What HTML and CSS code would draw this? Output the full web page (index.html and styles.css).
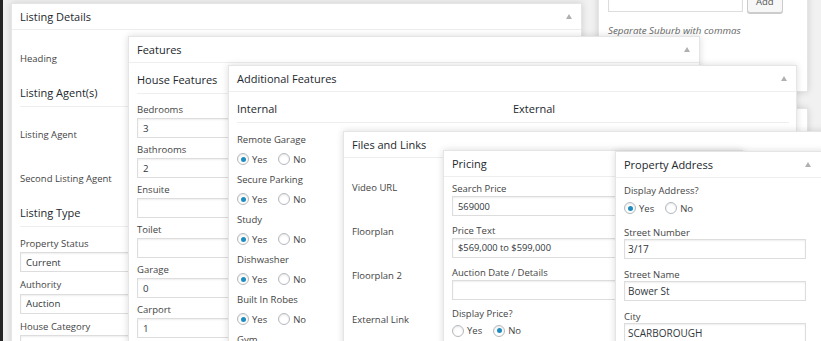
FILE: index.html
```html
<!DOCTYPE html>
<html lang="en">
<head>
  <meta charset="UTF-8">
  <title>Listing editor</title>
  <link rel="stylesheet" href="styles.css">
</head>
<body>
  <div class="desk">

    <!-- Listing Details -->
    <div class="postbox details">
      <h3 class="hndle"><span>Listing Details</span><i class="arrow"></i></h3>
      <div class="inside">
        <div class="row">Heading</div>
        <h4 class="section">Listing Agent(s)</h4>
        <div class="row">Listing Agent</div>
        <div class="row">Second Listing Agent</div>
        <h4 class="section">Listing Type</h4>
        <div class="stack">
          <label class="lbl">Property Status</label>
          <select class="box"><option>Current</option></select>
          <label class="lbl">Authority</label>
          <select class="box"><option>Auction</option></select>
          <label class="lbl">House Category</label>
          <select class="box"><option></option></select>
        </div>
      </div>
    </div>

    <!-- sidebar boxes -->
    <div class="postbox side-tags">
      <div class="inside">
        <div class="tag-row">
          <input class="box tag-input" type="text">
          <button class="button">Add</button>
        </div>
        <p class="howto">Separate Suburb with commas</p>
      </div>
    </div>
    <div class="postbox side-next"></div>

    <!-- Features -->
    <div class="postbox features">
      <h3 class="hndle"><span>Features</span><i class="arrow"></i></h3>
      <div class="inside">
        <h4 class="section">House Features</h4>
        <div class="stack">
          <label class="lbl">Bedrooms</label>
          <input class="box" type="text" value="3">
          <label class="lbl">Bathrooms</label>
          <input class="box" type="text" value="2">
          <label class="lbl">Ensuite</label>
          <input class="box" type="text" value="">
          <label class="lbl">Toilet</label>
          <input class="box" type="text" value="">
          <label class="lbl">Garage</label>
          <input class="box" type="text" value="0">
          <label class="lbl">Carport</label>
          <input class="box" type="text" value="1">
        </div>
      </div>
    </div>

    <!-- Additional Features -->
    <div class="postbox additional">
      <h3 class="hndle"><span>Additional Features</span><i class="arrow"></i></h3>
      <div class="inside cols">
        <div class="col">
          <h4 class="section">Internal</h4>
          <div class="opts">
            <div class="opt">
              <div class="lbl">Remote Garage</div>
              <div class="radios">
                <label class="choice"><input type="radio" name="rg" checked>Yes</label>
                <label class="choice"><input type="radio" name="rg">No</label>
              </div>
            </div>
            <div class="opt">
              <div class="lbl">Secure Parking</div>
              <div class="radios">
                <label class="choice"><input type="radio" name="sp" checked>Yes</label>
                <label class="choice"><input type="radio" name="sp">No</label>
              </div>
            </div>
            <div class="opt">
              <div class="lbl">Study</div>
              <div class="radios">
                <label class="choice"><input type="radio" name="st" checked>Yes</label>
                <label class="choice"><input type="radio" name="st">No</label>
              </div>
            </div>
            <div class="opt">
              <div class="lbl">Dishwasher</div>
              <div class="radios">
                <label class="choice"><input type="radio" name="dw" checked>Yes</label>
                <label class="choice"><input type="radio" name="dw">No</label>
              </div>
            </div>
            <div class="opt">
              <div class="lbl">Built In Robes</div>
              <div class="radios">
                <label class="choice"><input type="radio" name="br" checked>Yes</label>
                <label class="choice"><input type="radio" name="br">No</label>
              </div>
            </div>
            <div class="opt">
              <div class="lbl">Gym</div>
              <div class="radios">
                <label class="choice"><input type="radio" name="gy" checked>Yes</label>
                <label class="choice"><input type="radio" name="gy">No</label>
              </div>
            </div>
          </div>
        </div>
        <div class="col">
          <h4 class="section">External</h4>
        </div>
      </div>
    </div>

    <!-- Files and Links -->
    <div class="postbox files">
      <h3 class="hndle"><span>Files and Links</span><i class="arrow"></i></h3>
      <div class="inside">
        <div class="row">Video URL</div>
        <div class="row">Floorplan</div>
        <div class="row">Floorplan 2</div>
        <div class="row">External Link</div>
      </div>
    </div>

    <!-- Pricing -->
    <div class="postbox pricing">
      <h3 class="hndle"><span>Pricing</span><i class="arrow"></i></h3>
      <div class="inside">
        <label class="lbl">Search Price</label>
        <input class="box" type="text" value="569000">
        <label class="lbl">Price Text</label>
        <input class="box" type="text" value="$569,000 to $599,000">
        <label class="lbl">Auction Date / Details</label>
        <input class="box" type="text" value="">
        <label class="lbl">Display Price?</label>
        <div class="radios">
          <label class="choice"><input type="radio" name="dp">Yes</label>
          <label class="choice"><input type="radio" name="dp" checked>No</label>
        </div>
      </div>
    </div>

    <!-- Property Address -->
    <div class="postbox address">
      <h3 class="hndle"><span>Property Address</span><i class="arrow"></i></h3>
      <div class="inside">
        <div class="lbl">Display Address?</div>
        <div class="radios">
          <label class="choice"><input type="radio" name="da" checked>Yes</label>
          <label class="choice"><input type="radio" name="da">No</label>
        </div>
        <div class="stack">
          <label class="lbl">Street Number</label>
          <input class="box" type="text" value="3/17">
          <label class="lbl">Street Name</label>
          <input class="box" type="text" value="Bower St">
          <label class="lbl">City</label>
          <input class="box" type="text" value="SCARBOROUGH">
        </div>
      </div>
    </div>

  </div>
</body>
</html>
```

FILE: styles.css
```css
body {
  margin: 0;
  font-family: "Open Sans", sans-serif;
  color: #444;
  overflow: hidden;
}

.desk {
  position: relative;
  height: 341px;
  overflow: hidden;
  background: linear-gradient(to right, #262626 3px, #f1f1f1 3px);
}

/* panels sit on the desk like loose windows */
.postbox {
  position: absolute;
  box-sizing: border-box;
  background: #fff;
  border: 1px solid #e5e5e5;
  box-shadow: 0 0 7px rgba(0, 0, 0, 0.14);
}

.hndle {
  display: flex;
  justify-content: space-between;
  align-items: center;
  height: 25px;
  margin: 0;
  padding: 0 9px 0 8px;
  border-bottom: 1px solid #eee;
  font-size: 11px;
  font-weight: 400;
  color: #23282d;
}

.arrow {
  width: 0;
  height: 0;
  border-left: 3.5px solid transparent;
  border-right: 3.5px solid transparent;
  border-bottom: 5px solid #b0b0b0;
}

.inside {
  padding: 0 8px;
  font-size: 9.5px;
}

.section {
  margin: 0;
  font-size: 11px;
  font-weight: 400;
  line-height: 14px;
  color: #23282d;
  padding-bottom: 6px;
  border-bottom: 1px solid #eee;
}

.row {
  display: flex;
  align-items: center;
  height: 44px;
  color: #444;
}

.lbl {
  display: block;
  line-height: 12px;
  color: #444;
}

.box {
  display: block;
  box-sizing: border-box;
  width: 100%;
  height: 20px;
  margin: 0;
  padding: 0 5px;
  border: 1px solid #ddd;
  border-radius: 0;
  background: #fff;
  box-shadow: inset 0 1px 2px rgba(0, 0, 0, 0.07);
  font-family: "Open Sans", sans-serif;
  font-size: 9.7px;
  color: #32373c;
  -webkit-appearance: none;
  appearance: none;
  outline: none;
}

/* radio buttons */
.radios {
  display: flex;
  align-items: center;
  height: 14px;
}

.choice {
  display: inline-flex;
  align-items: center;
  gap: 3px;
  margin-right: 11px;
  color: #444;
}

.choice input {
  -webkit-appearance: none;
  appearance: none;
  box-sizing: border-box;
  width: 12px;
  height: 12px;
  margin: 0;
  border: 1px solid #b4b9be;
  border-radius: 50%;
  background: #fff;
  box-shadow: inset 0 1px 2px rgba(0, 0, 0, 0.1);
  display: inline-flex;
  align-items: center;
  justify-content: center;
}

.choice input:checked::before {
  content: "";
  width: 5px;
  height: 5px;
  border-radius: 50%;
  background: #1e8cbe;
}

/* Listing Details */
.details {
  left: 11px;
  top: 3px;
  width: 571px;
  height: 400px;
}

.details .inside {
  padding-top: 6px;
}

.details .section {
  margin: 5.5px 0;
}

.details .stack {
  padding-top: 5.5px;
}

.details .lbl {
  margin-bottom: 2.5px;
}

.details .box {
  margin-bottom: 7px;
}

/* sidebar */
.side-tags {
  left: 598px;
  top: -14px;
  width: 210px;
  height: 106px;
}

.side-tags .inside {
  padding: 3px 9px 0;
}

.tag-row {
  display: flex;
  align-items: flex-start;
  gap: 4px;
}

.tag-input {
  width: 135px;
  height: 22px;
}

.button {
  height: 23px;
  padding: 0 8px;
  border: 1px solid #ccc;
  border-radius: 3px;
  background: #f7f7f7;
  box-shadow: 0 1px 0 #ccc;
  font-family: "Open Sans", sans-serif;
  font-size: 9.5px;
  color: #555;
}

.howto {
  margin: 11px 0 0;
  line-height: 13px;
  font-size: 9.8px;
  font-style: italic;
  color: #666;
}

.side-next {
  left: 598px;
  top: 108px;
  width: 210px;
  height: 300px;
}

/* Features */
.features {
  left: 128px;
  top: 36px;
  width: 572px;
  height: 400px;
}

.features .inside {
  padding-top: 10px;
}

.features .stack {
  padding-top: 10px;
}

.features .lbl {
  margin-bottom: 2px;
}

.features .box {
  margin-bottom: 6px;
}

/* Additional Features */
.additional {
  left: 228px;
  top: 65px;
  width: 569px;
  height: 400px;
}

.cols {
  display: grid;
  grid-template-columns: 276px 276px;
  padding-top: 10px;
}

.opts {
  padding-top: 3px;
}

.opt {
  padding-top: 8px;
}

.opt .radios {
  margin-top: 6px;
}

/* Files and Links */
.files {
  left: 343px;
  top: 131px;
  width: 560px;
  height: 300px;
}

.files .inside {
  padding-top: 7px;
}

/* Pricing */
.pricing {
  left: 443px;
  top: 150px;
  width: 300px;
  height: 300px;
}

.pricing .inside {
  padding-top: 6.3px;
}

.pricing .lbl {
  margin-bottom: 1px;
}

.pricing .box {
  margin-bottom: 8.7px;
  font-size: 9.3px;
}

.pricing .radios {
  margin-top: 3.6px;
}

/* Property Address */
.address {
  left: 615px;
  top: 151px;
  width: 210px;
  height: 300px;
}

.address .hndle {
  padding-right: 13px;
}

.address .inside {
  padding-top: 6.7px;
}

.address .radios {
  margin-top: 4.6px;
}

.address .stack {
  padding-top: 11.4px;
}

.address .box {
  width: 182px;
  margin-bottom: 10px;
  padding: 0 3px;
  font-size: 10px;
}
```
